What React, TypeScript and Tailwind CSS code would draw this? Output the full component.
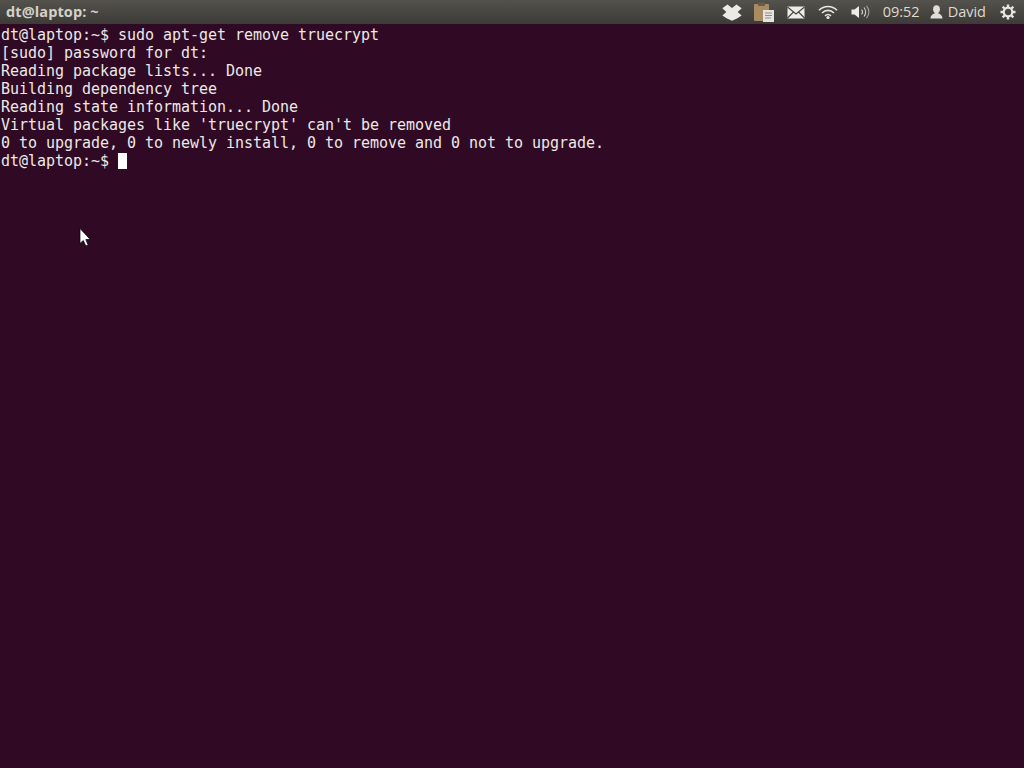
export default function App() {
  const lines = [
    "dt@laptop:~$ sudo apt-get remove truecrypt",
    "[sudo] password for dt:",
    "Reading package lists... Done",
    "Building dependency tree",
    "Reading state information... Done",
    "Virtual packages like 'truecrypt' can't be removed",
    "0 to upgrade, 0 to newly install, 0 to remove and 0 not to upgrade.",
  ];
  return (
    <div className="relative w-[1024px] h-[768px] overflow-hidden bg-[#300a24] flex flex-col">
      <div className="h-6 shrink-0 flex items-center bg-gradient-to-b from-[#53524c] to-[#3c3b37] font-['Open_Sans','Noto_Sans',sans-serif] text-[14.5px] text-[#dfdbd2]">
        <span className="pl-[6px] font-bold text-[#d5d1c8] text-[14.5px] tracking-[0.1px]">dt@laptop: ~</span>
        <div className="ml-auto flex items-center h-6">
          <svg width="20" height="17" viewBox="0 0 20 17" className="mr-[11px]" fill="#eceae5">
            <path d="M5.5 0.5 L10 4 L14.5 0.5 L19.7 4.3 L15.7 8 L19.7 11.5 L15 14.5 L10 16.8 L5 14.5 L0.3 11.5 L4.3 8 L0.3 4.3 Z" />
          </svg>
          <svg width="22" height="20" viewBox="0 0 22 20" className="mr-[12px]">
            <rect x="1" y="2" width="15" height="17" rx="1" fill="#a88a63" />
            <rect x="5" y="0.5" width="7" height="3.5" rx="1" fill="#6b5a44" />
            <rect x="10" y="8" width="11" height="12" fill="#e6e4e0" />
            <path d="M12 11h7M12 13.5h7M12 16h6" stroke="#8c8c88" strokeWidth="1" />
          </svg>
          <svg width="18" height="13" viewBox="0 0 18 13" className="mr-[13px]">
            <rect x="0.5" y="0.5" width="17" height="12" fill="#eeece7" />
            <path d="M0.5 1 L9 8 L17.5 1 M0.5 12 L6.5 6 M17.5 12 L11.5 6" stroke="#45443f" strokeWidth="1.1" fill="none" />
          </svg>
          <svg width="20" height="14" viewBox="0 0 20 14" className="mr-[13px]" fill="none" stroke="#e8e6e1" strokeWidth="1.6">
            <path d="M1 5.2 C6 0.2 14 0.2 19 5.2" />
            <path d="M4 8 C7.5 4.5 12.5 4.5 16 8" />
            <path d="M7 10.8 C8.8 9.2 11.2 9.2 13 10.8" />
            <circle cx="10" cy="12.5" r="0.8" fill="#e8e6e1" />
          </svg>
          <svg width="20" height="14" viewBox="0 0 20 14" className="mr-[12px]" fill="none" stroke="#d5d2cb" strokeWidth="1.1">
            <path d="M0.5 4.5 H3.5 L8 1 V13 L3.5 9.5 H0.5 Z" fill="#eeece7" stroke="none" />
            <path d="M10.5 4.5 C11.8 6 11.8 8 10.5 9.5" />
            <path d="M13 2.5 C15.2 5 15.2 9 13 11.5" />
            <path d="M15.5 0.8 C18.7 4.5 18.7 9.5 15.5 13.2" stroke="#a5a29b" />
          </svg>
          <span className="mr-[10px]">09:52</span>
          <svg width="13" height="14" viewBox="0 0 13 14" className="mr-[5px]">
            <ellipse cx="6.5" cy="4.2" rx="3.4" ry="4" fill="#e0ddd6" />
            <path d="M0.5 13.5 C0.5 10 3.5 9 5 8 H8 C9.5 9 12.5 10 12.5 13.5 Z" fill="#e0ddd6" />
          </svg>
          <span className="mr-[14px]">David</span>
          <svg width="16" height="16" viewBox="0 0 16 16" className="mr-2" fill="none" stroke="#e8e6e1">
            <circle cx="8" cy="8" r="4.3" strokeWidth="2.2" />
            <path d="M8 0.5V3M8 13V15.5M0.5 8H3M13 8H15.5M2.7 2.7L4.5 4.5M11.5 11.5L13.3 13.3M13.3 2.7L11.5 4.5M4.5 11.5L2.7 13.3" strokeWidth="2.4" />
          </svg>
        </div>
      </div>
      <div className="relative flex-1 pt-[2px] pl-[1px] font-['DejaVu_Sans_Mono',monospace] text-[15px] leading-[18px] tracking-[-0.03px] text-[#ece9e6]">
        {lines.map((l) => (
          <div key={l} className="whitespace-pre h-[18px]">{l}</div>
        ))}
        <div className="whitespace-pre h-[18px] flex">
          <span>dt@laptop:~$ </span>
          <span className="w-[9px] h-4 mt-[1px] bg-white" />
        </div>
        <svg width="12" height="19" viewBox="0 0 12 19" className="absolute left-[79px] top-[204px]">
          <path d="M1 0.5 V15.5 L4.3 12.5 L6.8 18 L9.2 17 L6.8 11.6 L11.2 11.4 Z" fill="#fff" stroke="#000" strokeWidth="0.7" />
        </svg>
      </div>
    </div>
  );
}
